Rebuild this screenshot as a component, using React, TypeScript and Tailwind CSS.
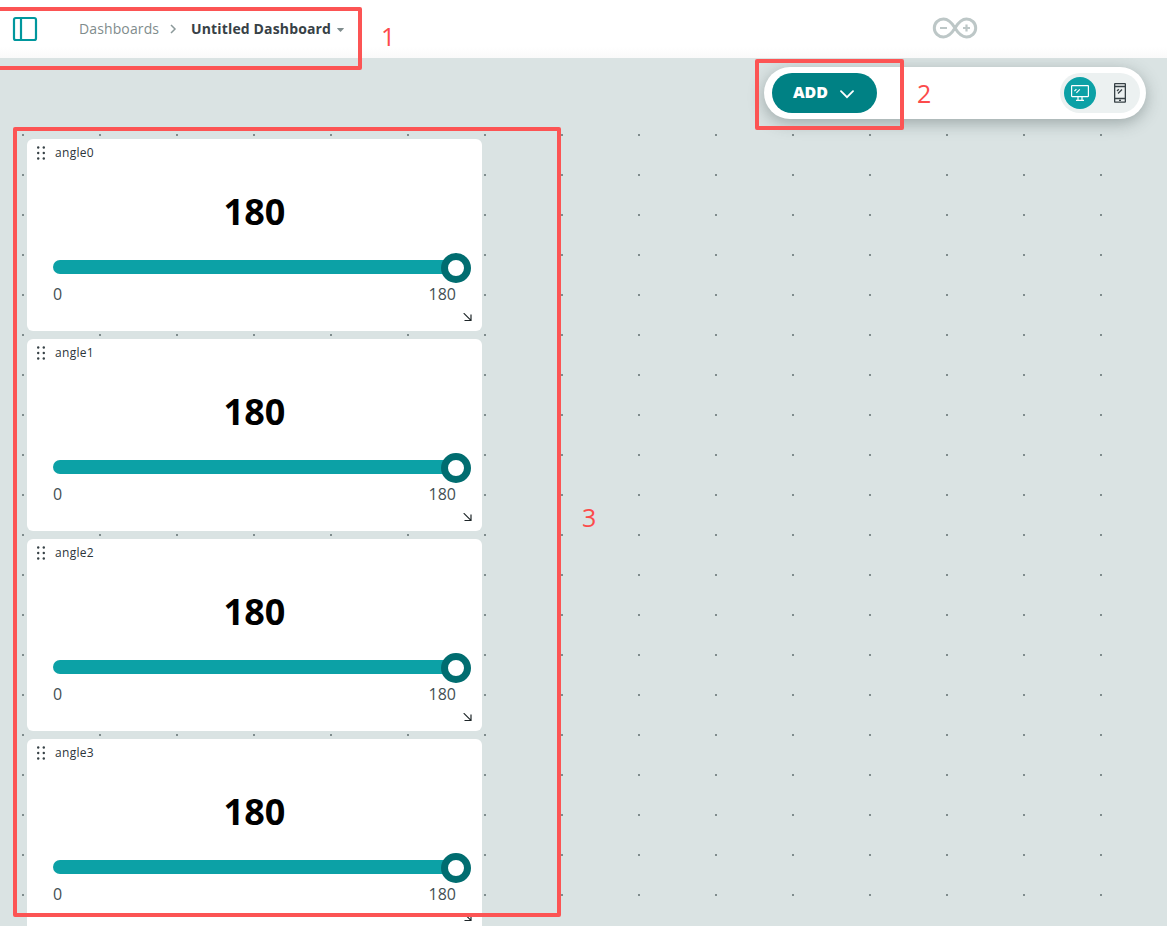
import React from "react";

const columns = Array.from({ length: 15 }, (_, i) => 22 + Math.floor(i * 77.05));
const rows = Array.from({ length: 20 }, (_, i) => 76 + i * 40);
const widgets = ["angle0", "angle1", "angle2", "angle3"];

function DotGrid() {
  return (
    <svg className="absolute inset-0 h-full w-full" fill="#7f8c8d" shapeRendering="crispEdges">
      {rows.map((y) => columns.map((x) => <rect key={`${x}-${y}`} x={x} y={y} width="2" height="2" />))}
    </svg>
  );
}

function SidebarIcon() {
  return (
    <svg className="size-[26px]" viewBox="0 0 26 26" fill="none" stroke="#00979d" strokeWidth="2.2">
      <rect x="2" y="2" width="22" height="22" rx="1.8" />
      <path d="M9 2v22" />
    </svg>
  );
}

function ArduinoLogo() {
  return (
    <svg className="h-[22px] w-[46px]" viewBox="0 0 46 22" fill="none" stroke="#bdc7c7" strokeWidth="3">
      <path d="M23 11C19.5 5.2 16 2 11.5 2a9.2 9 0 0 0 0 18C16 20 19.5 16.8 23 11S30 2 34.5 2a9.2 9 0 0 1 0 18C30 20 26.5 16.8 23 11Z" />
      <path d="M8 11h7M31 11h7M34.5 7.5v7" strokeWidth="2.2" />
    </svg>
  );
}

function Header() {
  return (
    <header className="flex h-[58px] items-start bg-linear-to-b from-white from-80% to-[#fafafa]">
      <div className="ml-3 mt-4 h-[26px]">
        <SidebarIcon />
      </div>
      <nav className="ml-[41px] mt-[18px] flex h-[22px] items-center text-[14px] leading-[22px]">
        <span className="w-[81px] whitespace-nowrap tracking-[0.12px] text-[#7f8c8d]">Dashboards</span>
        <svg className="ml-[9px] h-[10px] w-[8px]" viewBox="0 0 8 10" fill="none" stroke="#8b999a" strokeWidth="1.5">
          <path d="M2 1l4 4-4 4" />
        </svg>
        <span className="ml-[14px] w-[140px] whitespace-nowrap font-bold tracking-[0.15px] text-[#374146]">Untitled Dashboard</span>
        <svg className="ml-[6px] mt-px h-[4px] w-[7px]" viewBox="0 0 7 4" fill="#7f8c8d">
          <path d="M.3 0h6.4v.8L3.5 4 .3.8Z" />
        </svg>
      </nav>
      <div className="ml-[588px] mt-[17px] h-[22px]">
        <ArduinoLogo />
      </div>
    </header>
  );
}

function Toolbar() {
  return (
    <div className="absolute left-[764px] top-[9px] flex h-[52px] w-[382px] items-center justify-between rounded-full bg-white pl-2 pr-[6px] shadow-[0_4px_16px_rgba(55,70,70,0.38)]">
      <button className="flex h-10 w-[105px] items-center rounded-full bg-[#008184] pl-[20px] text-[16px] font-extrabold leading-6 text-white">
        <span className="-mt-0.5 w-[37px]">ADD</span>
        <svg className="ml-[11px] mt-[3px] h-[9px] w-[14px]" viewBox="0 0 14 9" fill="none" stroke="white" strokeWidth="1.8" strokeLinecap="round">
          <path d="M1 1.2l6 6 6-6" />
        </svg>
      </button>
      <div className="flex h-10 w-20 items-center rounded-full bg-[#ecf1f1] pl-1">
        <div className="flex size-8 items-center justify-center rounded-full bg-[#0ca1a6]">
          <svg className="h-[18px] w-[18px]" viewBox="0 0 18 18" fill="none" stroke="white" strokeWidth="1.2">
            <rect x=".6" y="1.6" width="16.8" height="11" rx=".5" />
            <path d="M7 13v3.2M11 13v3.2M5 16.4h8M3.4 7.2l2-2M5.400 8.800l3.400-3.400" />
          </svg>
        </div>
        <svg className="ml-[18px] h-5 w-3" viewBox="0 0 12 20" fill="none" stroke="#374146" strokeWidth="1.3">
          <rect x=".65" y=".65" width="10.7" height="18.5" rx=".4" />
          <path d="M.6 3.5h10.8M.6 15.5h10.8M3 8l1.800-1.800M4 10.500l4-4M5 17.300h2" />
        </svg>
      </div>
    </div>
  );
}

function SliderWidget({ name }: { name: string }) {
  return (
    <section className="flex h-[192px] w-[455px] shrink-0 flex-col rounded-[6px] bg-white">
      <div className="flex h-7 items-center pl-[10px]">
        <svg className="h-[14px] w-2" viewBox="0 0 8 14" fill="#374146">
          {[1.5, 7, 12.5].map((y) => (
            <g key={y}>
              <circle cx="1.2" cy={y} r="1.2" />
              <circle cx="6.8" cy={y} r="1.2" />
            </g>
          ))}
        </svg>
        <span className="ml-[10px] text-[12px] leading-4 tracking-[0.3px] text-[#2c353a]">{name}</span>
      </div>
      <div className="mt-[20px] h-[50px] text-center text-[36px] font-bold leading-[50px] text-black">180</div>
      <div className="ml-[26px] mt-4 flex h-[30px] w-[418px] items-center">
        <div className="-mr-2 h-[14px] flex-1 -translate-y-px rounded-l-full bg-[#0ca1a6]" />
        <div className="z-10 size-[30px] rounded-full border-[7px] border-[#006d70] bg-white" />
      </div>
      <div className="ml-[26px] flex w-[403px] justify-between text-[16px] leading-[22px] text-[#434f54]">
        <span>0</span>
        <span>180</span>
      </div>
      <svg className="ml-[436px] mt-2 size-[9px]" viewBox="0 0 9 9" fill="none" stroke="#1f272a" strokeWidth="1.2">
        <path d="M.7.2l7 7M8 1.500V7.500H1.500" />
      </svg>
    </section>
  );
}

export default function App() {
  return (
    <div className="relative h-[926px] w-[1167px] overflow-hidden bg-[#dae3e3] font-['Open_Sans',sans-serif]">
      <Header />
      <main className="relative h-[868px] overflow-hidden pl-[27px] pt-[81px]">
        <DotGrid />
        <div className="relative flex flex-col gap-2">
          {widgets.map((name) => (
            <SliderWidget key={name} name={name} />
          ))}
        </div>
        <Toolbar />
      </main>
      <div className="absolute -left-2 top-[7px] h-[63px] w-[370px] rounded-[2px] border-4 border-[#fc5454]" />
      <div className="absolute left-[755px] top-[59px] h-[71px] w-[149px] rounded-[2px] border-4 border-[#fc5454]" />
      <div className="absolute left-[13px] top-[127px] h-[790px] w-[548px] rounded-[2px] border-4 border-[#fc5454]" />
      <span className="absolute left-[381px] top-[20px] text-[25px] leading-[32px] text-[#fc4b4b]">1</span>
      <span className="absolute left-[917px] top-[77px] text-[25px] leading-[32px] text-[#fc4b4b]">2</span>
      <span className="absolute left-[582px] top-[501px] text-[25px] leading-[32px] text-[#fc4b4b]">3</span>
    </div>
  );
}
